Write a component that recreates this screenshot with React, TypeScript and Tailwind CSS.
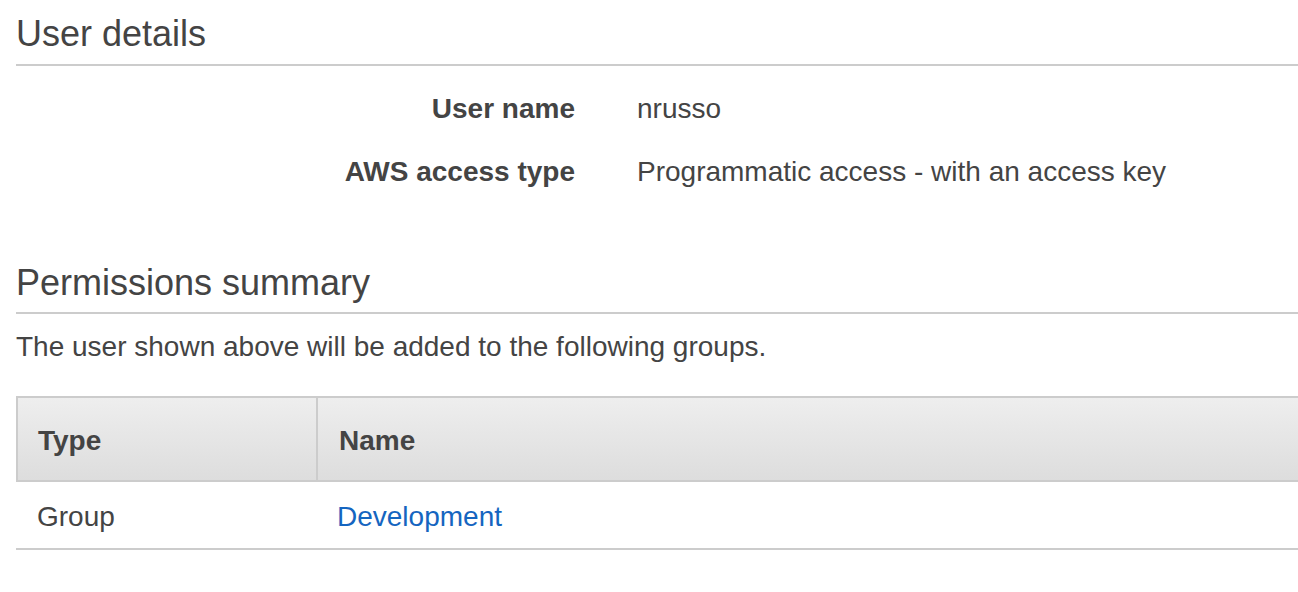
export default function App() {
  return (
    <div
      className="min-h-[592px] w-[1298px] overflow-hidden bg-white pl-4 text-[#444444]"
      style={{ fontFamily: '"Liberation Sans", Arial, Helvetica, sans-serif' }}
    >
      <h2 className="mt-[16px] border-b-2 border-[#cccccc] pb-[12px] text-[36px] font-normal leading-[36px]">
        User details
      </h2>

      <div className="mt-[27px] grid grid-cols-[559px_1fr] gap-x-[62px] gap-y-[31px] text-[28px] leading-[32px]">
        <div className="text-right font-bold">User name</div>
        <div>nrusso</div>
        <div className="text-right font-bold">AWS access type</div>
        <div>Programmatic access - with an access key</div>
      </div>

      <h2 className="mt-[77px] border-b-2 border-[#cccccc] pb-[11px] text-[36px] font-normal leading-[36px]">
        Permissions summary
      </h2>

      <p className="mt-[17px] text-[28px] leading-[32px]">
        The user shown above will be added to the following groups.
      </p>

      <div className="mt-[33px] text-[28px] leading-[32px]">
        <div className="flex border-2 border-r-0 border-[#cccccc] bg-gradient-to-b from-[#eeeeee] to-[#dddddd] font-bold">
          <div className="w-[300px] border-r-2 border-[#cccccc] pb-[23px] pl-[20px] pt-[27px]">Type</div>
          <div className="flex-1 pb-[23px] pl-[21px] pt-[27px]">Name</div>
        </div>
        <div className="flex border-b-2 border-[#cccccc] pb-[15px] pt-[19px]">
          <div className="w-[302px] pl-[21px]">Group</div>
          <div className="flex-1 pl-[19px]">
            <a href="#" className="text-[#1565c0]">
              Development
            </a>
          </div>
        </div>
      </div>
    </div>
  );
}
